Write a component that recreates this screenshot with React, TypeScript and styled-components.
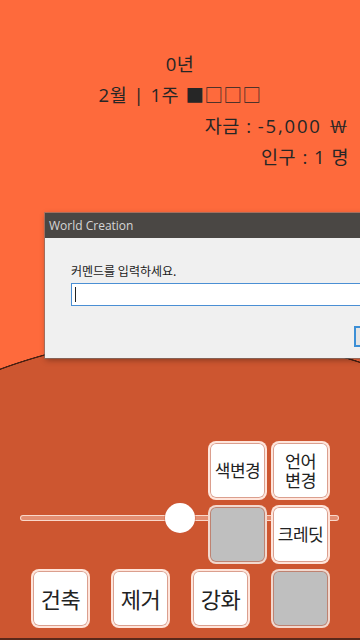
import React from "react";
import styled, { createGlobalStyle } from "styled-components";

const Global = createGlobalStyle`
  html, body { margin: 0; padding: 0; }
  body { width: 360px; height: 640px; overflow: hidden; }
`;

const KR = `"Noto Sans CJK KR", "Noto Sans", sans-serif`;

const Page = styled.div`
  position: relative;
  width: 360px;
  height: 640px;
  overflow: hidden;
  background: #fe6a3c;
  display: flex;
  flex-direction: column;
  font-family: ${KR};
  color: #222;
`;

const Header = styled.header`
  display: flex;
  flex-direction: column;
  padding: 48px 11px 0 11px;
  font-family: "Open Sans", "Noto Sans CJK KR", sans-serif;
  font-size: 18.5px;
  line-height: 31px;
  letter-spacing: 0.5px;
  word-spacing: 1px;
  color: #262626;
`;

const Line = styled.div<{ $align: "center" | "right" }>`
  text-align: ${(p) => p.$align};
  white-space: pre;
`;

const Amount = styled.span`
  letter-spacing: 1.8px;
`;

const Currency = styled.span`
  display: inline-block;
  width: 21px;
  text-align: center;
  transform: scaleX(1.6);
  letter-spacing: 0;
  font-weight: 300;
`;

const Spacer = styled.div`
  flex: 1;
`;

const Ground = styled.section`
  height: 305px;
  box-sizing: border-box;
  border-bottom: 2px solid #5a281a;
  background: radial-gradient(
    circle 550px at 190px 550px,
    #cd5630 548.6px,
    #4a2012 549.2px,
    #4a2012 550px,
    transparent 550.6px
  );
  display: flex;
  flex-direction: column;
  justify-content: flex-end;
  padding-bottom: 10px;
  gap: 5px;
`;

const Row = styled.div`
  display: flex;
  justify-content: flex-end;
  gap: 4px;
  padding-right: 30px;
  height: 59px;
`;

const BottomRow = styled(Row)`
  gap: 21px;
`;

const LayeredRow = styled.div`
  display: grid;
  height: 59px;
  & > * {
    grid-area: 1 / 1;
  }
`;

const SliderTrack = styled.div`
  align-self: start;
  margin: 10px 21px 0 20px;
  height: 6px;
  box-sizing: border-box;
  border-radius: 3px;
  background: rgba(255, 210, 195, 0.45);
  border: 1px solid rgba(255, 235, 225, 0.8);
  display: flex;
  align-items: center;
`;

const Thumb = styled.div`
  flex-shrink: 0;
  width: 30px;
  height: 30px;
  border-radius: 50%;
  background: #fff;
  box-shadow: 0 0 0 1px rgba(200, 90, 60, 0.35);
`;

const Btn = styled.div<{ $size?: number; $gray?: boolean; $lh?: number }>`
  position: relative;
  z-index: 1;
  width: 59px;
  height: 59px;
  box-sizing: border-box;
  border-radius: 8px;
  border: 2px solid rgba(255, 222, 210, 0.8);
  box-shadow: inset 0 0 0 1px rgba(190, 80, 50, 0.55);
  background: ${(p) => (p.$gray ? "#bfbfbf" : "#ffffff")};
  display: flex;
  flex-direction: column;
  align-items: center;
  justify-content: center;
  text-align: center;
  font-size: ${(p) => p.$size ?? 17}px;
  line-height: ${(p) => p.$lh ?? 1.2};
  color: #222;
  letter-spacing: -0.5px;
`;

const BtnLine = styled.span`
  display: block;
  height: 18.5px;
  line-height: 18.5px;
`;

const Dialog = styled.div`
  position: absolute;
  left: 45px;
  top: 213px;
  width: 340px;
  background: #f0f0f0;
  box-shadow: 0 0 0 1px rgba(120, 120, 120, 0.6), 1px 2px 6px rgba(0, 0, 0, 0.35);
`;

const TitleBar = styled.div`
  height: 25px;
  background: #4a4744;
  color: #d6d6d6;
  font-family: "Open Sans", "Noto Sans", sans-serif;
  font-size: 12px;
  line-height: 25px;
  padding-left: 4px;
`;

const DialogBody = styled.div`
  height: 120px;
  box-sizing: border-box;
  padding: 25px 0 0 26px;
  display: flex;
  flex-direction: column;
  align-items: flex-start;
`;

const Label = styled.div`
  font-family: ${KR};
  font-size: 12px;
  line-height: 16px;
  color: #1a1a1a;
`;

const Input = styled.div`
  margin-top: 4px;
  width: 300px;
  height: 23px;
  box-sizing: border-box;
  background: #fff;
  border: 1px solid #4a8fd4;
  display: flex;
  align-items: center;
  padding-left: 3px;
`;

const Caret = styled.span`
  width: 1px;
  height: 15px;
  background: #222;
`;

const OkButton = styled.div`
  margin-top: 20px;
  margin-left: 283px;
  width: 75px;
  height: 21px;
  box-sizing: border-box;
  border: 2px solid #3c8fd6;
  background: #e5e5e5;
`;

export default function App() {
  const sliderValue = 50;
  return (
    <>
      <Global />
      <Page>
        <Header>
          <Line $align="center">0년</Line>
          <Line $align="center">2월 | 1주 ■□□□</Line>
          <Line $align="right">
            자금 : <Amount>-5,000</Amount> <Currency>₩</Currency>
          </Line>
          <Line $align="right">인구 : 1 명</Line>
        </Header>
        <Spacer />
        <Ground>
          <Row>
            <Btn $size={17}>색변경</Btn>
            <Btn $size={17.5}>
              <BtnLine>언어</BtnLine>
              <BtnLine>변경</BtnLine>
            </Btn>
          </Row>
          <LayeredRow>
            <SliderTrack>
              <Thumb style={{ marginLeft: `calc(${sliderValue}% - 15px)` }} />
            </SliderTrack>
            <Row>
              <Btn $gray />
              <Btn $size={17}>크레딧</Btn>
            </Row>
          </LayeredRow>
          <BottomRow>
            <Btn $size={22}>건축</Btn>
            <Btn $size={22}>제거</Btn>
            <Btn $size={22}>강화</Btn>
            <Btn $gray />
          </BottomRow>
        </Ground>
        <Dialog>
          <TitleBar>World Creation</TitleBar>
          <DialogBody>
            <Label>커멘드를 입력하세요.</Label>
            <Input>
              <Caret />
            </Input>
            <OkButton />
          </DialogBody>
        </Dialog>
      </Page>
    </>
  );
}
